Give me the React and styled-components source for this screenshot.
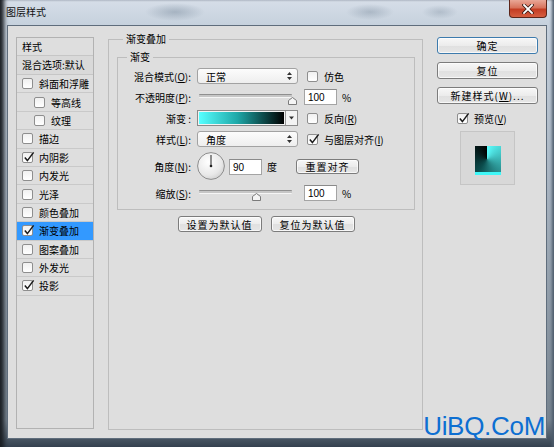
import React from 'react';
import styled, { createGlobalStyle } from 'styled-components';

const GlobalStyle = createGlobalStyle`
  html, body { margin: 0; padding: 0; background: #56616d; }
  body {
    font-family: "Noto Sans CJK SC", "Liberation Sans", sans-serif;
    font-size: 10px;
    color: #000;
  }
  * { box-sizing: border-box; }
`;

const effects = [
  { name: '斜面和浮雕' },
  { name: '等高线', sub: true },
  { name: '纹理', sub: true },
  { name: '描边' },
  { name: '内阴影', checked: true },
  { name: '内发光' },
  { name: '光泽' },
  { name: '颜色叠加' },
  { name: '渐变叠加', checked: true, active: true },
  { name: '图案叠加' },
  { name: '外发光' },
  { name: '投影', checked: true },
];

const Window = styled.div`
  position: relative;
  width: 554px;
  height: 447px;
  display: flex;
  flex-direction: column;
  overflow: hidden;
  background: linear-gradient(180deg, #d6dee8 0px, #c6d1dd 25px, #a9b5c2 180px, #76838f 420px, #34414f 447px);
  box-shadow: inset 7px 0 4px -3px #1a1e23, inset -3px 0 3px -1px #4d5b6b;
`;

const TitleBar = styled.div`
  height: 25px;
  flex: none;
  display: flex;
  align-items: flex-start;
  justify-content: space-between;
  padding-left: 6px;
  background:
    radial-gradient(ellipse 30px 9px at 175px 12px, rgba(90, 110, 130, 0.35), transparent),
    radial-gradient(ellipse 24px 8px at 370px 12px, rgba(90, 110, 130, 0.3), transparent),
    radial-gradient(ellipse 18px 7px at 440px 12px, rgba(90, 110, 130, 0.25), transparent);
`;

const Title = styled.span`
  margin-top: 5px;
  font-size: 10px;
  line-height: 13px;
  color: #111;
`;

const CloseButton = styled.div`
  width: 38px;
  height: 18px;
  margin-right: 7px;
  border: 1px solid #5c2519;
  border-top: none;
  border-radius: 0 0 4px 4px;
  background: linear-gradient(180deg, #e9a797 0%, #d8735c 45%, #c43d23 55%, #d65e40 100%);
  display: flex;
  align-items: center;
  justify-content: center;
`;

const Client = styled.div`
  flex: 1;
  margin: 0 7px 8px;
  background: #dedede;
  border: 1px solid #5f6d7c;
  display: flex;
  align-items: flex-start;
  padding: 11px 0 0 8px;
`;

const StylePanel = styled.div`
  width: 78px;
  height: 392px;
  border: 1px solid #b2b2b2;
  display: flex;
  flex-direction: column;
`;

const PanelHeader = styled.div`
  height: ${p => (p.$shade ? 19 : 18)}px;
  flex: none;
  display: flex;
  align-items: center;
  padding: 0 0 1px 5px;
  border-bottom: 1px solid #c6c6c6;
  background: ${p => (p.$shade ? '#d9d9d9' : '#dedede')};
`;

const EffectRow = styled.div`
  height: 18.4px;
  flex: none;
  display: flex;
  align-items: center;
  gap: 6px;
  padding-left: ${p => (p.$sub ? 17 : 5)}px;
  border-bottom: 1px solid #c9c9c9;
  background: ${p => (p.$active ? '#3399ff' : 'transparent')};
  white-space: nowrap;
`;

const Box = styled.span`
  position: relative;
  flex: none;
  width: 11px;
  height: 11px;
  border: 1px solid #8e8e8e;
  border-radius: 2px;
  background: linear-gradient(180deg, #f0f0f0, #ffffff);
  svg {
    position: absolute;
    left: 0;
    top: -2px;
  }
`;

const Check = ({ checked }) => (
  <Box>
    {checked && (
      <svg width="12" height="12" viewBox="0 0 12 12">
        <path d="M1.8 6.6 L4.4 9.6 L10.6 1.4" fill="none" stroke="#1a1a1a" strokeWidth="1.5" />
      </svg>
    )}
  </Box>
);

const GroupBox = styled.fieldset`
  margin: ${p => (p.$inner ? '4px 0 0 0' : '-5px 0 0 14px')};
  width: ${p => (p.$inner ? 'auto' : '315px')};
  height: ${p => (p.$inner ? 'auto' : '398px')};
  padding: ${p => (p.$inner ? '4px 0 8px 0' : '0 7px 0 8px')};
  border: 1px solid #bdbdbd;
  border-radius: 0;
  min-width: 0;
`;

const Legend = styled.legend`
  margin-left: ${p => (p.$inner ? 9 : 6)}px;
  padding: 0 3px;
  font-size: 10px;
  line-height: 14px;
`;

const FormGrid = styled.div`
  display: grid;
  grid-template-columns: 73px 101px 1fr;
  grid-template-rows: 16px 16px 16px 16px 28px 16px;
  column-gap: 6px;
  row-gap: 5px;
  align-items: center;
`;

const Label = styled.div`
  text-align: right;
  white-space: nowrap;
  u { text-decoration: underline; }
`;

const Select = styled.div`
  height: 16px;
  border: 1px solid #a2a2a2;
  border-radius: 3px;
  background: linear-gradient(180deg, #fcfcfc, #eeeeee);
  display: flex;
  align-items: center;
  justify-content: space-between;
  padding: 0 5px 0 8px;
`;

const Arrows = () => (
  <svg width="5" height="8" viewBox="0 0 5 8">
    <path d="M0 3 L2.5 0 L5 3 Z M0 5 L2.5 8 L5 5 Z" fill="#333" />
  </svg>
);

const CheckField = styled.div`
  display: flex;
  align-items: center;
  gap: 6px;
  margin-left: 3px;
  white-space: nowrap;
`;

const ValueCell = styled.div`
  display: flex;
  align-items: center;
  gap: 5px;
`;

const Field = styled.div`
  width: ${p => p.$w || 33}px;
  height: 16px;
  flex: none;
  border: 1px solid #a4a4a4;
  border-top-color: #8a8a8a;
  background: #fff;
  display: flex;
  align-items: center;
  padding-left: 3px;
  font-family: "Liberation Sans", sans-serif;
  font-size: 10px;
`;

const Slider = styled.div`
  position: relative;
  height: 16px;
`;

const Track = styled.div`
  margin: 5px 6px 0 2px;
  height: 4px;
  background: #c6c6c6;
  border-top: 1px solid #8f8f8f;
  border-bottom: 1px solid #f5f5f5;
  border-radius: 1px;
`;

const Thumb = styled.svg`
  position: absolute;
  top: 8px;
  left: ${p => p.$pos - 4.5}px;
`;

const GradientPicker = styled.div`
  height: 16px;
  display: flex;
  border: 1px solid #8a8a8a;
  background: #f3f3f3;
`;

const Swatch = styled.div`
  flex: 1;
  margin: 1px;
  background: linear-gradient(90deg, #56ffff 0%, #1ea8a8 45%, #000 100%);
`;

const DropPart = styled.div`
  width: 12px;
  border-left: 1px solid #9a9a9a;
  display: flex;
  align-items: center;
  justify-content: center;
`;

const AngleCell = styled.div`
  grid-column: 2 / 4;
  display: flex;
  align-items: center;
  span { margin-left: 5px; }
`;

const Button = styled.div`
  height: ${p => p.$h || 17}px;
  width: ${p => (p.$w ? `${p.$w}px` : 'auto')};
  flex: none;
  margin-left: ${p => p.$ml || 0}px;
  border: 1px solid ${p => (p.$default ? '#3d7bad' : '#7c7c7c')};
  border-radius: 3px;
  background: linear-gradient(180deg, #f7f7f7 0%, #ececec 50%, #e0e0e0 51%, #e6e6e6 100%);
  box-shadow: inset 0 0 0 1px rgba(255, 255, 255, 0.7);
  display: flex;
  align-items: center;
  justify-content: center;
  letter-spacing: 1px;
  white-space: nowrap;
  u { text-decoration: underline; }
`;

const DefaultsRow = styled.div`
  display: flex;
  justify-content: center;
  gap: 9px;
  margin-top: 6px;
`;

const Side = styled.div`
  width: 101px;
  margin-left: 14px;
  display: flex;
  flex-direction: column;
  gap: 8px;
`;

const PreviewToggle = styled.div`
  display: flex;
  align-items: center;
  gap: 6px;
  padding-left: 20px;
  height: 12px;
  u { text-decoration: underline; }
`;

const PreviewBox = styled.div`
  width: 55px;
  height: 54px;
  margin: -1px 0 0 23px;
  border: 1px solid #c5c5c5;
  background: #d8d8d8;
  display: flex;
  align-items: center;
  justify-content: center;
`;

const PreviewSwatch = styled.div`
  width: 26px;
  height: 29px;
  margin-top: 4px;
  background:
    linear-gradient(#3ff7f7, #3ff7f7) bottom / 100% 3px no-repeat,
    conic-gradient(from 0deg at 46% 45%, #5cffff, #0b4c4c 60%, #000);
`;

const Watermark = styled.div`
  position: absolute;
  right: 9px;
  bottom: 7px;
  font-family: "Liberation Sans", sans-serif;
  font-size: 26px;
  line-height: 28px;
  color: #0d6fd2;
  letter-spacing: -0.3px;
`;

const Thumbs = ({ pos }) => (
  <Thumb $pos={pos} width="9" height="8" viewBox="0 0 9 8">
    <polygon points="0.5,7.5 0.5,3.5 4.5,0.5 8.5,3.5 8.5,7.5" fill="#f4f4f4" stroke="#7b7b7b" />
  </Thumb>
);

const Dial = () => (
  <svg width="28" height="28" viewBox="0 0 28 28">
    <defs>
      <radialGradient id="dialFill" cx="40%" cy="35%" r="70%">
        <stop offset="0%" stopColor="#ffffff" />
        <stop offset="70%" stopColor="#e8e8e8" />
        <stop offset="100%" stopColor="#d0d0d0" />
      </radialGradient>
    </defs>
    <circle cx="14" cy="14" r="13.4" fill="url(#dialFill)" stroke="#8d8d8d" strokeWidth="1" />
    <line x1="14" y1="14" x2="14" y2="3" stroke="#222" strokeWidth="1" />
    <circle cx="14" cy="14" r="1.3" fill="#222" />
  </svg>
);

export default function App() {
  return (
    <>
      <GlobalStyle />
      <Window>
        <TitleBar>
          <Title>图层样式</Title>
          <CloseButton>
            <svg width="12" height="10" viewBox="0 0 12 10">
              <path d="M2 1 L10 9 M10 1 L2 9" stroke="#3a1a12" strokeWidth="3.4" strokeLinecap="square" />
              <path d="M2 1 L10 9 M10 1 L2 9" stroke="#ffffff" strokeWidth="1.8" strokeLinecap="square" />
            </svg>
          </CloseButton>
        </TitleBar>

        <Client>
          <StylePanel>
            <PanelHeader>样式</PanelHeader>
            <PanelHeader $shade>混合选项:默认</PanelHeader>
            {effects.map(e => (
              <EffectRow key={e.name} $sub={e.sub} $active={e.active}>
                <Check checked={e.checked} />
                <span>{e.name}</span>
              </EffectRow>
            ))}
          </StylePanel>

          <GroupBox>
            <Legend>渐变叠加</Legend>
            <GroupBox $inner>
              <Legend $inner>渐变</Legend>
              <FormGrid>
                <Label>混合模式(<u>O</u>):</Label>
                <Select>
                  <span>正常</span>
                  <Arrows />
                </Select>
                <CheckField>
                  <Check />
                  <span>仿色</span>
                </CheckField>

                <Label>不透明度(<u>P</u>):</Label>
                <Slider>
                  <Track />
                  <Thumbs pos={95} />
                </Slider>
                <ValueCell>
                  <Field>100</Field>
                  <span>%</span>
                </ValueCell>

                <Label>渐变 :</Label>
                <GradientPicker>
                  <Swatch />
                  <DropPart>
                    <svg width="5" height="4" viewBox="0 0 5 4">
                      <path d="M0 0.5 L5 0.5 L2.5 3.5 Z" fill="#333" />
                    </svg>
                  </DropPart>
                </GradientPicker>
                <CheckField>
                  <Check />
                  <span>反向(<u>R</u>)</span>
                </CheckField>

                <Label>样式(<u>L</u>):</Label>
                <Select>
                  <span>角度</span>
                  <Arrows />
                </Select>
                <CheckField>
                  <Check checked />
                  <span>与图层对齐(<u>I</u>)</span>
                </CheckField>

                <Label>角度(<u>N</u>):</Label>
                <AngleCell>
                  <Dial />
                  <Field style={{ marginLeft: 4, marginTop: 2 }}>90</Field>
                  <span>度</span>
                  <Button $h={15} $w={63} $ml={19}>重置对齐</Button>
                </AngleCell>

                <Label>缩放(<u>S</u>):</Label>
                <Slider>
                  <Track />
                  <Thumbs pos={59} />
                </Slider>
                <ValueCell>
                  <Field>100</Field>
                  <span>%</span>
                </ValueCell>
              </FormGrid>
            </GroupBox>
            <DefaultsRow>
              <Button $h={16} $w={84}>设置为默认值</Button>
              <Button $h={16} $w={84}>复位为默认值</Button>
            </DefaultsRow>
          </GroupBox>

          <Side>
            <Button $default>确定</Button>
            <Button>复位</Button>
            <Button>新建样式(<u>W</u>)...</Button>
            <PreviewToggle>
              <Check checked />
              <span>预览(<u>V</u>)</span>
            </PreviewToggle>
            <PreviewBox>
              <PreviewSwatch />
            </PreviewBox>
          </Side>
        </Client>

        <Watermark>UiBQ.CoM</Watermark>
      </Window>
    </>
  );
}
